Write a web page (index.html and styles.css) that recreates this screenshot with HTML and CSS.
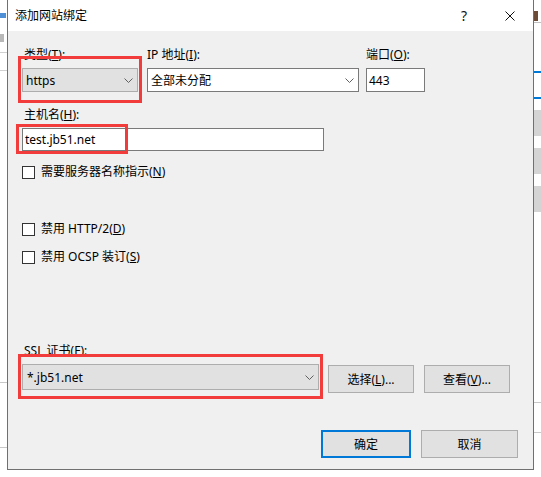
FILE: index.html
```html
<!DOCTYPE html>
<html lang="zh-CN">
<head>
    <meta charset="UTF-8">
    <meta name="viewport" content="width=device-width, initial-scale=1.0">
    <title>添加网站绑定</title>
    <link rel="stylesheet" href="styles.css">
</head>
<body>
    <div class="screen">
        <div class="side side-left"></div>
        <div class="dialog">
            <div class="titlebar">
                <span class="title">添加网站绑定</span>
                <span class="caption-btn help">?</span>
                <span class="caption-btn close">
                    <svg width="10" height="10" viewBox="0 0 10 10"><path d="M0.5 0.5L9.5 9.5M9.5 0.5L0.5 9.5" stroke="#111" stroke-width="1" fill="none"/></svg>
                </span>
            </div>
            <div class="content">
                <div class="row-binding">
                    <div class="field field-type">
                        <div class="label">类型(<u>T</u>):</div>
                        <div class="combo combo-gray combo-type">
                            <span class="value">https</span>
                            <svg class="chevron" width="9" height="5" viewBox="0 0 9 5"><path d="M0.5 0.5L4.5 4.5L8.5 0.5" stroke="#606060" fill="none"/></svg>
                        </div>
                        <div class="mark mark-type"></div>
                    </div>
                    <div class="field field-ip">
                        <div class="label">IP 地址(<u>I</u>):</div>
                        <div class="combo combo-white combo-ip">
                            <span class="value">全部未分配</span>
                            <svg class="chevron" width="9" height="5" viewBox="0 0 9 5"><path d="M0.5 0.5L4.5 4.5L8.5 0.5" stroke="#606060" fill="none"/></svg>
                        </div>
                    </div>
                    <div class="field field-port">
                        <div class="label">端口(<u>O</u>):</div>
                        <div class="textbox port-box">443</div>
                    </div>
                </div>

                <div class="field field-host">
                    <div class="label">主机名(<u>H</u>):</div>
                    <div class="textbox host-box">test.jb51.net</div>
                    <div class="mark mark-host"></div>
                </div>

                <div class="check check-sni"><span class="box"></span><span class="text">需要服务器名称指示(<u>N</u>)</span></div>
                <div class="check check-http2"><span class="box"></span><span class="text">禁用 HTTP/2(<u>D</u>)</span></div>
                <div class="check check-ocsp"><span class="box"></span><span class="text">禁用 OCSP 装订(<u>S</u>)</span></div>

                <div class="field field-ssl">
                    <div class="label">SSL 证书(<u>F</u>):</div>
                    <div class="ssl-row">
                        <div class="combo combo-gray combo-ssl">
                            <span class="value">*.jb51.net</span>
                            <svg class="chevron" width="9" height="5" viewBox="0 0 9 5"><path d="M0.5 0.5L4.5 4.5L8.5 0.5" stroke="#606060" fill="none"/></svg>
                        </div>
                        <div class="button btn-select"><span>选择(<u>L</u>)...</span></div>
                        <div class="button btn-view"><span>查看(<u>V</u>)...</span></div>
                    </div>
                    <div class="mark mark-ssl"></div>
                </div>

                <div class="actions">
                    <div class="button btn-ok">确定</div>
                    <div class="button btn-cancel">取消</div>
                </div>
            </div>
        </div>
        <div class="side side-right"></div>
    </div>
</body>
</html>
```

FILE: styles.css
```css
body {
    margin: 0;
    padding: 0;
    background-color: #fff;
    font-family: "Noto Sans", "Noto Sans CJK SC", sans-serif;
    font-size: 12px;
    color: #000;
}
.screen {
    display: flex;
    width: 541px;
    height: 477px;
    overflow: hidden;
    align-items: flex-start;
}
.side {
    width: 7px;
    height: 477px;
    flex: none;
}
.side-left {
    background:
        linear-gradient(#4f8fd6, #4f8fd6) 0 13px / 6px 5px no-repeat,
        linear-gradient(#b8b8b8, #b8b8b8) 0 34px / 4px 8px no-repeat,
        linear-gradient(#d0d0d0, #d0d0d0) 0 52px / 100% 1px no-repeat,
        linear-gradient(#d0d0d0, #d0d0d0) 0 70px / 100% 1px no-repeat,
        linear-gradient(#c8c8c8, #c8c8c8) 0 382px / 100% 1px no-repeat,
        linear-gradient(#c8c8c8, #c8c8c8) 0 447px / 100% 1px no-repeat,
        #fff;
}
.side-right {
    background:
        linear-gradient(#6b4a36, #6b4a36) 0 11px / 4px 10px no-repeat,
        linear-gradient(#c0c0c0, #c0c0c0) 0 22px / 100% 1px no-repeat,
        linear-gradient(#0078d7, #0078d7) 0 71px / 100% 2px no-repeat,
        linear-gradient(#0078d7, #0078d7) 0 97px / 100% 2px no-repeat,
        linear-gradient(#d4d4d4, #d4d4d4) 0 110px / 100% 26px no-repeat,
        linear-gradient(#d4d4d4, #d4d4d4) 0 148px / 100% 26px no-repeat,
        linear-gradient(#d4d4d4, #d4d4d4) 0 186px / 100% 26px no-repeat,
        linear-gradient(#c8c8c8, #c8c8c8) 0 402px / 100% 1px no-repeat,
        linear-gradient(#c8c8c8, #c8c8c8) 0 432px / 100% 1px no-repeat,
        #fff;
}
.dialog {
    width: 527px;
    height: 470px;
    flex: none;
    box-sizing: border-box;
    border: 1px solid #707070;
    border-top: none;
    background-color: #f0f0f0;
    display: flex;
    flex-direction: column;
}
.titlebar {
    height: 31px;
    background-color: #fff;
    display: flex;
    align-items: center;
    padding-left: 7px;
}
.title {
    flex: 1;
    line-height: 16px;
}
.caption-btn {
    width: 46px;
    height: 31px;
    display: flex;
    align-items: center;
    justify-content: center;
}
.help {
    font-size: 14px;
    color: #111;
}
.content {
    padding: 16px 15px 0 14px;
    position: relative;
}
.label {
    line-height: 16px;
    height: 16px;
    margin-bottom: 5px;
    white-space: nowrap;
}
.field {
    position: relative;
}
.row-binding {
    display: flex;
}
.field-type .label,
.field-host .label,
.field-ssl .label {
    padding-left: 2px;
}
.field-ip {
    margin-left: 9px;
}
.field-port {
    margin-left: 7px;
}
.combo {
    box-sizing: border-box;
    display: flex;
    align-items: center;
    padding: 0 4px 0 3px;
}
.combo .value {
    flex: 1;
    white-space: nowrap;
}
.combo-gray {
    background-color: #e1e1e1;
    border: 1px solid #adadad;
}
.combo-white {
    background-color: #fff;
    border: 1px solid #7a7a7a;
}
.combo-type {
    width: 116px;
    height: 24px;
}
.combo-ip {
    width: 212px;
    height: 24px;
}
.textbox {
    box-sizing: border-box;
    background-color: #fff;
    border: 1px solid #7a7a7a;
    padding-left: 2px;
    display: flex;
    align-items: center;
}
.port-box {
    width: 59px;
    height: 24px;
}
.field-host {
    margin-top: 15px;
}
.host-box {
    width: 302px;
    height: 23px;
}
.check {
    display: flex;
    align-items: center;
    line-height: 16px;
    height: 16px;
    gap: 6px;
}
.check .text {
    white-space: nowrap;
}
.check .box {
    width: 13px;
    height: 13px;
    box-sizing: border-box;
    border: 1px solid #333;
    background-color: #fff;
}
.check-sni {
    margin-top: 13px;
}
.check-http2 {
    margin-top: 41px;
}
.check-ocsp {
    margin-top: 12px;
}
.field-ssl {
    margin-top: 78px;
}
.ssl-row {
    display: flex;
    align-items: flex-start;
}
.combo-ssl {
    width: 297px;
    height: 26px;
    padding-left: 4px;
}
.button {
    box-sizing: border-box;
    background-color: #e1e1e1;
    border: 1px solid #adadad;
    display: flex;
    align-items: center;
    justify-content: center;
    white-space: nowrap;
}
.btn-select {
    width: 86px;
    height: 28px;
    margin-left: 9px;
    margin-top: 1px;
}
.btn-view {
    width: 86px;
    height: 28px;
    margin-left: 10px;
    margin-top: 1px;
}
.actions {
    display: flex;
    justify-content: flex-end;
    margin-top: 37px;
    gap: 10px;
}
.btn-ok {
    width: 90px;
    height: 28px;
    border: 2px solid #0078d7;
}
.btn-cancel {
    width: 97px;
    height: 28px;
}
.mark {
    position: absolute;
    box-sizing: border-box;
    border: 3px solid #f23c3c;
}
.mark-type {
    left: -4px;
    top: 9px;
    width: 124px;
    height: 47px;
}
.mark-host {
    left: -6px;
    top: 17px;
    width: 112px;
    height: 30px;
}
.mark-ssl {
    left: -4px;
    top: 11px;
    width: 305px;
    height: 45px;
}
```
